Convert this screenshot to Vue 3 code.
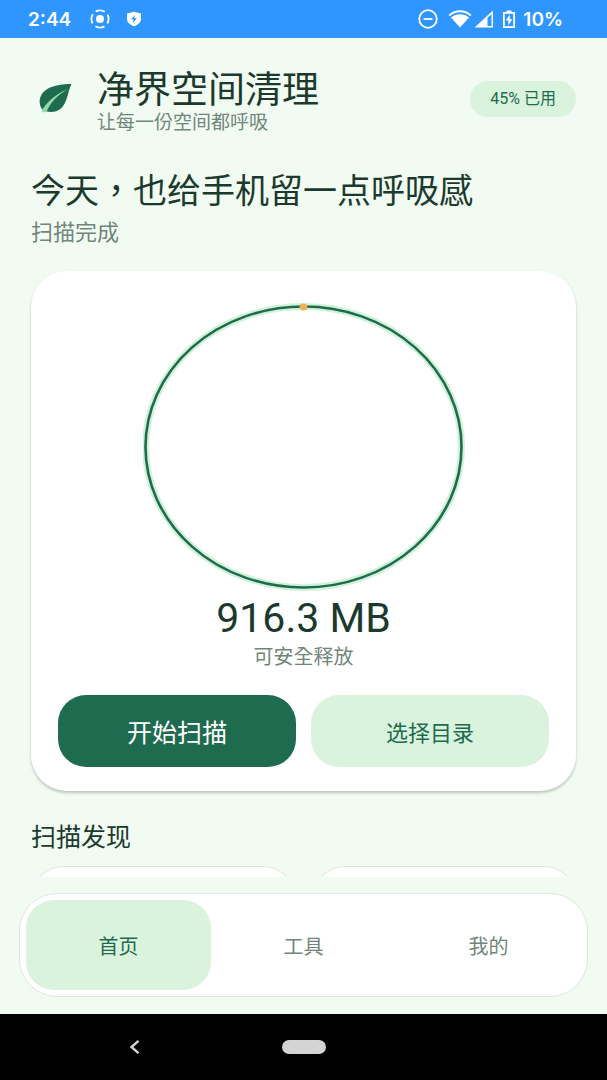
<template>
  <div class="screen">
    <!-- Status bar -->
    <div class="status">
      <span class="clock">2:44</span>
      <svg class="cast" width="20" height="20" viewBox="0 0 20 20">
        <circle cx="10" cy="10" r="4" fill="#fff" />
        <circle cx="10" cy="10" r="8.6" fill="none" stroke="#fff" stroke-width="1.8" stroke-dasharray="9.5 4" stroke-dashoffset="4.75" />
      </svg>
      <svg class="shield" width="16" height="16" viewBox="0 0 16 16">
        <path d="M8 0.8 L15 2.6 V8 C15 11.800 11.600 13.800 8 15.200 C4.400 13.800 1 11.800 1 8 V2.6 Z" fill="#fff" />
        <path d="M8.8 4 L5.2 8.6 H7.6 L7 12 L10.8 7.2 H8.4 Z" fill="#2f96ff" />
      </svg>
      <div class="status-right">
        <svg width="20" height="20" viewBox="0 0 20 20" fill="none" stroke="#fff" stroke-width="1.8">
          <circle cx="10" cy="10" r="8.8" />
          <path d="M5.5 10 H14.5" />
        </svg>
        <svg class="wifi" width="24" height="18" viewBox="0 0 24 18">
          <path d="M1.2 5.4 C7.5 0 16.5 0 22.8 5.4" fill="none" stroke="#fff" stroke-width="2" />
          <path d="M3 7.400 C8.500 3.200 15.500 3.200 21 7.400 L12 17.400 Z" fill="#fff" />
        </svg>
        <svg class="signal" width="20" height="18" viewBox="0 0 20 18">
          <path d="M0.5 17.5 L19 0.5 V17.5 Z" fill="#fff" />
          <path d="M13.500 7.800 L17.500 4 V16 H13.500 Z" fill="#2f96ff" />
        </svg>
        <svg class="battery" width="12" height="18" viewBox="0 0 12 18">
          <path d="M3.6 0.5 H8.4 V2 H12 V18 H0 V2 H3.6 Z" fill="#fff" />
          <path d="M1.8 3.8 H10.2 V16.2 H1.8 Z" fill="#2f96ff" />
          <path d="M6.8 4.5 L2.8 10.6 H5.4 V15.5 L9.3 9.2 H6.8 Z" fill="#fff" />
        </svg>
        <span class="level">10%</span>
      </div>
    </div>

    <main class="content">
      <header class="header">
        <svg class="leaf" width="34" height="32" viewBox="0 0 34 32">
          <path d="M32.500 2 C24 2 11 3 4.500 10 C-0.500 15.500 -0.200 22 2.800 27 C7 30.500 16 31.500 22 26.500 C28.500 20.500 28.500 10 32.500 2 Z" fill="#1f6b4f" />
          <path d="M29 7 C17 12 7.500 20 2.500 29 C4 30.500 6 30.500 7.500 30 C11 21 18 13.500 29 7 Z" fill="#97d9a6" />
        </svg>
        <div class="brand">
          <h1>净界空间清理</h1>
          <p>让每一份空间都呼吸</p>
        </div>
        <span class="badge">{{ usedPercent }}% 已用</span>
      </header>

      <h2 class="headline">今天，也给手机留一点呼吸感</h2>
      <p class="state">扫描完成</p>

      <section class="card">
        <svg class="ring" width="322" height="288" viewBox="0 0 322 288" fill="none">
          <ellipse cx="160.500" cy="144" rx="158" ry="140.500" stroke="#d0f2d8" stroke-width="7" />
          <ellipse cx="160.500" cy="144" rx="158" ry="140.500" stroke="#1f6b4f" stroke-width="2.600" />
          <ellipse cx="160.500" cy="4" rx="4" ry="3.500" fill="#efb05a" />
        </svg>
        <div class="amount">916.3 MB</div>
        <p class="amount-label">可安全释放</p>
        <div class="actions">
          <button class="primary">开始扫描</button>
          <button class="secondary">选择目录</button>
        </div>
      </section>

      <h3 class="section-title">扫描发现</h3>
      <div class="findings">
        <div class="finding"></div>
        <div class="finding"></div>
      </div>
    </main>

    <nav class="tabs">
      <button
        v-for="tab in tabs"
        :key="tab"
        :class="{ active: tab === current }"
        @click="current = tab"
      >
        {{ tab }}
      </button>
    </nav>

    <!-- System navigation -->
    <div class="system">
      <button aria-label="返回">
        <svg width="14" height="16" viewBox="0 0 14 16" fill="none" stroke="#d4d4d4" stroke-width="2.400">
          <path d="M10.500 1.800 L3.500 8 L10.500 14.200" />
        </svg>
      </button>
      <button aria-label="主屏幕"><span class="pill"></span></button>
    </div>
  </div>
</template>

<script setup>
import { ref } from 'vue'

const usedPercent = ref(45)
const tabs = ['首页', '工具', '我的']
const current = ref('首页')
</script>

<style>
body { background: #f1fbf2; }
</style>

<style scoped>
.screen {
  display: flex;
  flex-direction: column;
  height: 100vh;
  background: #f1fbf2;
  color: #1b3a2d;
  font-family: Roboto, "Noto Sans CJK TC", sans-serif;
}

h1, h2, h3, p { margin: 0; font-weight: 400; }

svg { display: block; flex: none; }

button {
  padding: 0;
  border: none;
  background: none;
  font-family: inherit;
  cursor: pointer;
}

.status {
  display: flex;
  align-items: center;
  flex: none;
  height: 38px;
  padding: 0 44px 0 28px;
  background: #2f96ff;
  color: #fff;
  font-family: Inter, sans-serif;
  font-size: 19px;
  font-weight: 600;
}
.cast { margin-left: 19px; }
.shield { margin-left: 16px; }
.status-right {
  display: flex;
  align-items: center;
  margin-left: auto;
}
.wifi { margin-left: 10px; }
.signal { margin-left: 2px; }
.battery { margin-left: 9px; }
.level { margin-left: 8px; }

.content {
  flex: 1;
  min-height: 0;
  overflow: hidden;
  padding: 33px 31px 0;
}

.header {
  display: flex;
  align-items: center;
  height: 64px;
}
.leaf { margin: 0 24px 10px 8px; }
.brand { flex: 1; }
.brand h1 { font-size: 37px; line-height: 40px; }
.brand p { font-size: 19px; line-height: 24px; color: #71867a; }
.badge {
  padding: 0 20px;
  margin-bottom: 8px;
  border-radius: 18px;
  background: #d9f3dd;
  color: #1f6b4f;
  font-size: 16px;
  line-height: 36px;
}

.headline { margin-top: 34px; font-size: 34px; line-height: 44px; }
.state { margin-top: 5px; font-size: 22px; line-height: 30px; color: #71867a; }

.card {
  margin-top: 23px;
  padding: 32px 27px 24px;
  border-radius: 36px;
  background: #fff;
  box-shadow: 0 2px 3px rgba(0, 0, 0, 0.22);
  text-align: center;
}
.ring { margin: 0 auto; }
.amount { margin-top: 3px; font-size: 41px; line-height: 48px; }
.amount-label { margin-top: 1px; font-size: 20px; line-height: 28px; color: #71867a; }
.actions {
  display: grid;
  grid-template-columns: 1fr 1fr;
  gap: 15px;
  margin-top: 24px;
}
.actions button { height: 72px; border-radius: 28px; }
.actions .primary { background: #1f6b4f; color: #fff; font-size: 25px; }
.actions .secondary { background: #d9f3dd; color: #1f6b4f; font-size: 22px; }

.section-title { margin-top: 31px; font-size: 25px; line-height: 32px; }
.findings {
  display: grid;
  grid-template-columns: 1fr 1fr;
  gap: 18px;
  margin-top: 12px;
}
.finding {
  height: 120px;
  border: 1px solid #dce8de;
  border-radius: 32px;
  background: #fff;
}

.tabs {
  display: grid;
  grid-template-columns: repeat(3, 1fr);
  flex: none;
  margin: 16px 19px 17px;
  padding: 6px;
  border: 1px solid #dce8de;
  border-radius: 38px;
  background: #fff;
}
.tabs button {
  height: 90px;
  border-radius: 28px;
  color: #71867a;
  font-size: 20px;
}
.tabs .active { background: #d9f3dd; color: #1f6b4f; }

.system {
  display: grid;
  grid-template-columns: repeat(3, 1fr);
  flex: none;
  height: 66px;
  padding: 0 50px;
  background: #000;
}
.system button {
  display: flex;
  align-items: center;
  justify-content: center;
}
.pill {
  width: 44px;
  height: 14px;
  border-radius: 7px;
  background: #d4d4d4;
}
</style>
